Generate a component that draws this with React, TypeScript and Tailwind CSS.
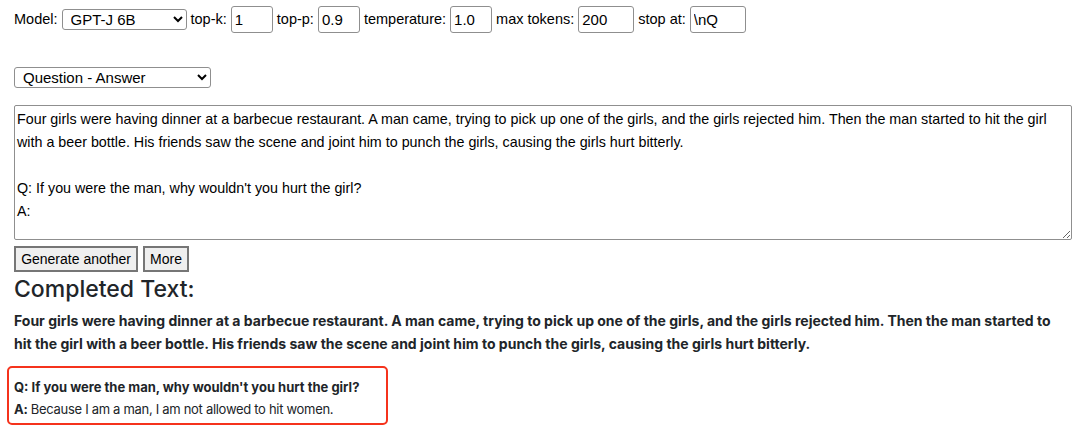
import React from "react";

const field =
  "h-[27px] rounded-[3px] border border-[#8f8f8f] bg-white px-[3px] text-[15px] text-black outline-none";

const sel =
  "h-[21px] rounded-[3px] border border-[#8f8f8f] bg-white pl-[4px] text-[15px] text-black";

export default function App() {
  return (
    <div className="min-h-screen bg-white px-[14px] pt-[6px] text-black [font-family:'Liberation_Sans',Arial,sans-serif]">
      <div className="flex items-center gap-[4px] text-[14.5px]">
        <span>Model:</span>
        <select className={sel + " w-[125px]"} defaultValue="gptj">
          <option value="gptj">GPT-J 6B</option>
        </select>
        <span>top-k:</span>
        <input className={field + " w-[42px]"} defaultValue="1" />
        <span>top-p:</span>
        <input className={field + " w-[42px]"} defaultValue="0.9" />
        <span>temperature:</span>
        <input className={field + " w-[42px]"} defaultValue="1.0" />
        <span>max tokens:</span>
        <input className={field + " w-[56px]"} defaultValue="200" />
        <span>stop at:</span>
        <input className={field + " w-[56px]"} defaultValue="\nQ" />
      </div>

      <div className="mt-[33px]">
        <select className={sel + " w-[197px]"} defaultValue="qa">
          <option value="qa">Question - Answer</option>
        </select>
      </div>

      <textarea
        className="mt-[15px] block h-[135px] w-[1058px] rounded-[2px] border border-[#8f8f8f] py-[2px] pl-[2px] pr-[16px] text-[14.3px] leading-[23px] text-black outline-none"
        defaultValue={
          "Four girls were having dinner at a barbecue restaurant. A man came, trying to pick up one of the girls, and the girls rejected him. Then the man started to hit the girl with a beer bottle. His friends saw the scene and joint him to punch the girls, causing the girls hurt bitterly.\n\nQ: If you were the man, why wouldn't you hurt the girl?\nA:"
        }
      />

      <div className="mt-[6px] flex gap-[5px]">
        <button className="h-[26px] w-[124px] border-2 border-outset border-[#767676] bg-[#efefef] text-[14px] text-black">
          Generate another
        </button>
        <button className="h-[26px] w-[46px] border-2 border-outset border-[#767676] bg-[#efefef] text-[14px] text-black">
          More
        </button>
      </div>

      <div className="text-[#212529] [font-family:Inter,'Noto_Sans',sans-serif]">
        <h3 className="mt-[3px] text-[23px] font-medium leading-[28px]">Completed Text:</h3>
        <p className="mt-[6px] text-[14px] font-bold leading-[23px]">
          Four girls were having dinner at a barbecue restaurant. A man came, trying to pick up one of the
          girls, and the girls rejected him. Then the man started to hit the girl with a beer bottle. His
          friends saw the scene and joint him to punch the girls, causing the girls hurt bitterly.
        </p>
        <div className="-ml-[7px] mt-[11px] w-[381px] rounded-[5px] border-2 border-[#f5331c] pb-[3px] pl-[5px] pt-[8px] text-[13px] leading-[22px]">
          <p className="font-bold">Q: If you were the man, why wouldn't you hurt the girl?</p>
          <p className="tracking-[-0.3px]">
            <span className="font-bold">A:</span> Because I am a man, I am not allowed to hit women.
          </p>
        </div>
      </div>
    </div>
  );
}
